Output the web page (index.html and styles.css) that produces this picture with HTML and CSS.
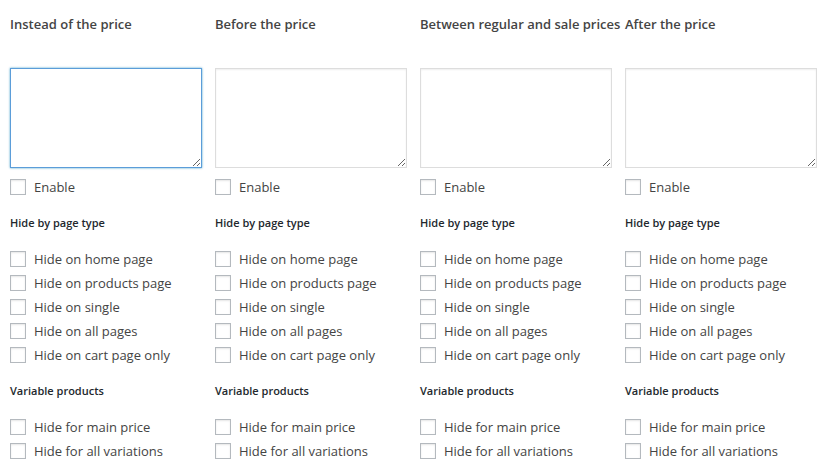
FILE: index.html
```html
<!DOCTYPE html>
<html lang="en">
<head>
  <meta charset="UTF-8">
  <title>Price labels</title>
  <link rel="stylesheet" href="styles.css">
</head>
<body>
  <div class="columns">
    <div class="column">
      <h3 class="title">Instead of the price</h3>
      <textarea class="box focused"></textarea>
      <label class="check"><input type="checkbox"> Enable</label>
      <h4 class="subtitle">Hide by page type</h4>
      <label class="check"><input type="checkbox"> Hide on home page</label>
      <label class="check"><input type="checkbox"> Hide on products page</label>
      <label class="check"><input type="checkbox"> Hide on single</label>
      <label class="check"><input type="checkbox"> Hide on all pages</label>
      <label class="check"><input type="checkbox"> Hide on cart page only</label>
      <h4 class="subtitle">Variable products</h4>
      <label class="check"><input type="checkbox"> Hide for main price</label>
      <label class="check"><input type="checkbox"> Hide for all variations</label>
    </div>
    <div class="column">
      <h3 class="title">Before the price</h3>
      <textarea class="box"></textarea>
      <label class="check"><input type="checkbox"> Enable</label>
      <h4 class="subtitle">Hide by page type</h4>
      <label class="check"><input type="checkbox"> Hide on home page</label>
      <label class="check"><input type="checkbox"> Hide on products page</label>
      <label class="check"><input type="checkbox"> Hide on single</label>
      <label class="check"><input type="checkbox"> Hide on all pages</label>
      <label class="check"><input type="checkbox"> Hide on cart page only</label>
      <h4 class="subtitle">Variable products</h4>
      <label class="check"><input type="checkbox"> Hide for main price</label>
      <label class="check"><input type="checkbox"> Hide for all variations</label>
    </div>
    <div class="column">
      <h3 class="title">Between regular and sale prices</h3>
      <textarea class="box"></textarea>
      <label class="check"><input type="checkbox"> Enable</label>
      <h4 class="subtitle">Hide by page type</h4>
      <label class="check"><input type="checkbox"> Hide on home page</label>
      <label class="check"><input type="checkbox"> Hide on products page</label>
      <label class="check"><input type="checkbox"> Hide on single</label>
      <label class="check"><input type="checkbox"> Hide on all pages</label>
      <label class="check"><input type="checkbox"> Hide on cart page only</label>
      <h4 class="subtitle">Variable products</h4>
      <label class="check"><input type="checkbox"> Hide for main price</label>
      <label class="check"><input type="checkbox"> Hide for all variations</label>
    </div>
    <div class="column">
      <h3 class="title">After the price</h3>
      <textarea class="box"></textarea>
      <label class="check"><input type="checkbox"> Enable</label>
      <h4 class="subtitle">Hide by page type</h4>
      <label class="check"><input type="checkbox"> Hide on home page</label>
      <label class="check"><input type="checkbox"> Hide on products page</label>
      <label class="check"><input type="checkbox"> Hide on single</label>
      <label class="check"><input type="checkbox"> Hide on all pages</label>
      <label class="check"><input type="checkbox"> Hide on cart page only</label>
      <h4 class="subtitle">Variable products</h4>
      <label class="check"><input type="checkbox"> Hide for main price</label>
      <label class="check"><input type="checkbox"> Hide for all variations</label>
    </div>
  </div>
</body>
</html>
```

FILE: styles.css
```css
body {
  margin: 0;
  padding: 14px 10px;
  background-color: #fff;
  color: #444;
  font-family: "Open Sans", sans-serif;
  font-size: 13px;
}

.columns {
  display: grid;
  grid-template-columns: repeat(4, 192px);
  column-gap: 13px;
}

.column {
  display: flex;
  flex-direction: column;
  min-width: 0;
}

.title {
  margin: 0 0 34px;
  height: 20px;
  line-height: 20px;
  font-size: 13px;
  font-weight: 600;
  color: #444;
  white-space: nowrap;
}

.box {
  box-sizing: border-box;
  width: 192px;
  height: 100px;
  margin: 0 0 7px;
  padding: 2px 6px;
  border: 1px solid #ddd;
  box-shadow: inset 0 1px 2px rgba(0, 0, 0, 0.07);
  background-color: #fff;
  font-family: inherit;
  outline: none;
}

.box.focused {
  border-color: #5b9dd9;
  box-shadow: 0 0 2px rgba(30, 140, 190, 0.8);
}

.subtitle {
  margin: 0;
  height: 48px;
  line-height: 48px;
  font-size: 11px;
  font-weight: 600;
  color: #23282d;
}

.check {
  display: flex;
  align-items: center;
  height: 24px;
  white-space: nowrap;
}

.check input {
  appearance: none;
  box-sizing: border-box;
  width: 16px;
  height: 16px;
  margin: 0 8px 0 0;
  border: 1px solid #b4b9be;
  background-color: #fff;
  box-shadow: inset 0 1px 2px rgba(0, 0, 0, 0.1);
}
```
